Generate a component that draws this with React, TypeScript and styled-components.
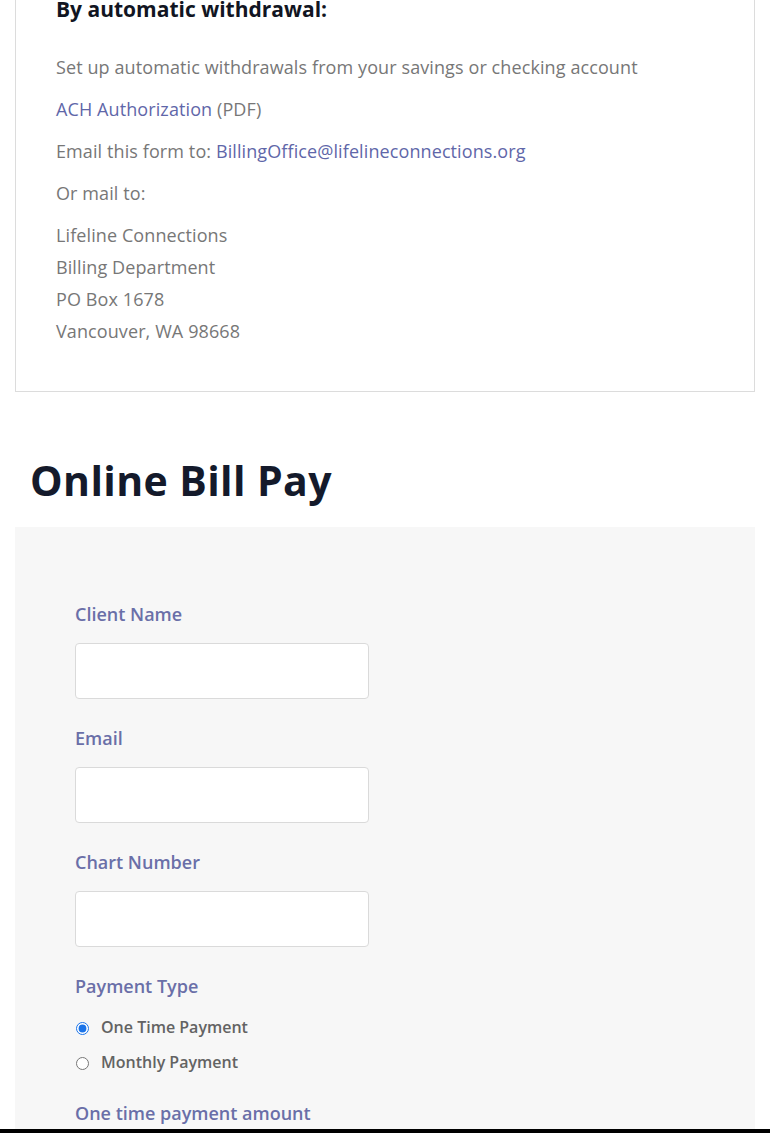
import React, { useState } from "react";
import styled, { createGlobalStyle } from "styled-components";

const GlobalStyle = createGlobalStyle`
  html, body {
    margin: 0;
    padding: 0;
    background: #ffffff;
    font-family: "Open Sans", "Noto Sans", Arial, sans-serif;
    overflow: hidden;
  }
  * { box-sizing: border-box; }
`;

const Page = styled.div`
  padding: 0 15px;
`;

const InfoCard = styled.div`
  margin-top: -38px;
  border: 1px solid #dcdcdc;
  padding: 32px 40px 34px 40px;
`;

const CardHeading = styled.h3`
  margin: 0 0 28px;
  font-size: 21px;
  line-height: 28px;
  font-weight: 700;
  color: #111522;
`;

const Para = styled.p`
  margin: 0 0 10px;
  font-size: 18px;
  line-height: 32px;
  letter-spacing: 0.1px;
  color: #777777;
`;

const Link = styled.a`
  color: #5f67a9;
  text-decoration: none;
`;

const SectionTitle = styled.h2`
  margin: 53px 0 0;
  padding: 0 15px;
  font-size: 41px;
  line-height: 70px;
  letter-spacing: 0.4px;
  font-weight: 700;
  color: #141a2b;
`;

const FormPanel = styled.form`
  margin-top: 12px;
  background: #f7f7f7;
  padding: 73px 60px 0;
`;

const Field = styled.div`
  margin-bottom: 25px;
`;

const Label = styled.label`
  display: block;
  font-size: 18px;
  line-height: 28px;
  font-weight: 600;
  color: #6a6fa8;
  margin-bottom: 15px;
`;

const TextInput = styled.input`
  display: block;
  width: 294px;
  height: 56px;
  border: 1px solid #dadada;
  border-radius: 4px;
  background: #ffffff;
  font-family: inherit;
  font-size: 16px;
  padding: 0 12px;
`;

const RadioGroup = styled.div`
  display: flex;
  flex-direction: column;
  gap: 11px;
  margin-top: 1px;
  margin-bottom: 0;
`;

const RadioRow = styled.label`
  display: flex;
  align-items: center;
  gap: 12px;
  font-size: 16px;
  line-height: 24px;
  font-weight: 600;
  color: #636363;
`;

const Radio = styled.input`
  margin: 2px 0 0 1px;
  width: 13px;
  height: 13px;
  accent-color: #1a73e8;
`;

const BottomBar = styled.div`
  position: fixed;
  left: 0;
  right: 0;
  bottom: 0;
  height: 4px;
  background: #000000;
`;

const fields = ["Client Name", "Email", "Chart Number"];

export default function App() {
  const [payType, setPayType] = useState("once");

  return (
    <>
      <GlobalStyle />
      <Page>
        <InfoCard>
          <CardHeading>By automatic withdrawal:</CardHeading>
          <Para>Set up automatic withdrawals from your savings or checking account</Para>
          <Para>
            <Link href="#">ACH Authorization</Link> (PDF)
          </Para>
          <Para>
            Email this form to: <Link href="#">BillingOffice@lifelineconnections.org</Link>
          </Para>
          <Para>Or mail to:</Para>
          <Para>
            Lifeline Connections
            <br />
            Billing Department
            <br />
            PO Box 1678
            <br />
            Vancouver, WA 98668
          </Para>
        </InfoCard>

        <SectionTitle>Online Bill Pay</SectionTitle>

        <FormPanel onSubmit={(e) => e.preventDefault()}>
          {fields.map((f) => (
            <Field key={f}>
              <Label>{f}</Label>
              <TextInput type="text" />
            </Field>
          ))}
          <Field>
            <Label>Payment Type</Label>
            <RadioGroup>
              <RadioRow>
                <Radio
                  type="radio"
                  name="paytype"
                  checked={payType === "once"}
                  onChange={() => setPayType("once")}
                />
                One Time Payment
              </RadioRow>
              <RadioRow>
                <Radio
                  type="radio"
                  name="paytype"
                  checked={payType === "monthly"}
                  onChange={() => setPayType("monthly")}
                />
                Monthly Payment
              </RadioRow>
            </RadioGroup>
          </Field>
          <Field>
            <Label>One time payment amount</Label>
            <TextInput type="text" />
          </Field>
        </FormPanel>
      </Page>
      <BottomBar />
    </>
  );
}
